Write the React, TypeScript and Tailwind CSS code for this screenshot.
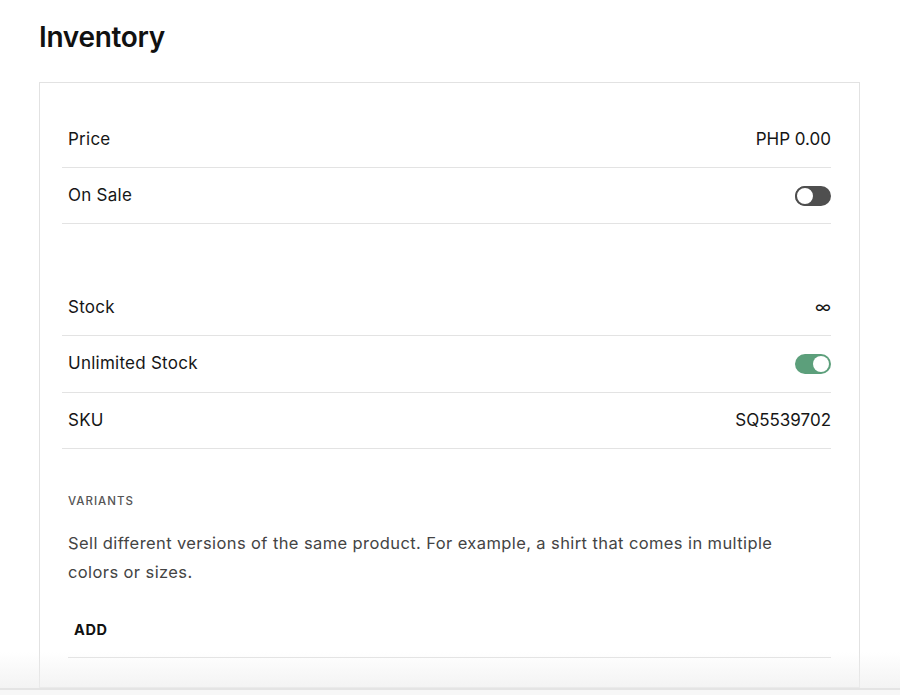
import React from "react";

function Toggle({ on }: { on: boolean }) {
  if (on) {
    return (
      <div className="w-[36px] h-[20px] rounded-full bg-[#5c9f7b] flex items-center justify-end pr-[2px]">
        <div className="w-[16px] h-[16px] rounded-full bg-white" />
      </div>
    );
  }
  return (
    <div className="w-[36px] h-[20px] rounded-full bg-[#4f4f4f] flex items-center justify-start">
      <div className="w-[20px] h-[20px] rounded-full bg-white border-[2px] border-[#4f4f4f]" />
    </div>
  );
}

function Row({ label, right }: { label: string; right: React.ReactNode }) {
  return (
    <div className="h-[56px] flex items-center justify-between border-b border-[#e3e3e3] pl-[6px]">
      <span className="text-[17px] text-[#161616] tracking-[0.25px]">{label}</span>
      {right}
    </div>
  );
}

export default function App() {
  return (
    <div
      className="relative w-[900px] h-[695px] bg-white overflow-hidden"
      style={{ fontFamily: "Inter, 'Liberation Sans', sans-serif" }}
    >
      <div className="pl-[39px] pt-[19px]">
        <h1 className="text-[28px] font-semibold text-[#111] leading-[36px] tracking-[-0.3px]">Inventory</h1>
      </div>
      <div className="ml-[39px] mt-[27px] w-[821px] h-[606px] border border-[#e2e2e2] pl-[22px] pr-[28px] pt-[29px]">
        <Row label="Price" right={<span className="text-[17px] text-[#161616]">PHP 0.00</span>} />
        <Row label="On Sale" right={<Toggle on={false} />} />
        <div className="h-[56px]" />
        <Row
          label="Stock"
          right={<span className="text-[17px] leading-none text-[#161616]">∞</span>}
        />
        <div className="h-[57px] flex items-center justify-between border-b border-[#e3e3e3] pl-[6px]">
          <span className="text-[17px] text-[#161616] tracking-[0.25px]">Unlimited Stock</span>
          <Toggle on={true} />
        </div>
        <Row label="SKU" right={<span className="text-[17px] text-[#161616]">SQ5539702</span>} />
        <div className="pl-[6px]">
          <div className="pt-[44px] text-[11.5px] tracking-[1px] text-[#555] font-medium leading-[16px]">VARIANTS</div>
          <p className="mt-[20px] text-[16.5px] leading-[29px] text-[#444] tracking-[0.4px] pr-[40px]">
            Sell different versions of the same product. For example, a shirt that comes in multiple colors or sizes.
          </p>
          <div className="mt-[33px] pl-[6px] text-[14.5px] font-bold text-[#111] tracking-[0.6px] leading-[20px]">ADD</div>
          <div className="mt-[17px] border-b border-[#e3e3e3]" />
        </div>
      </div>
      <div className="absolute left-0 right-0 bottom-[7px] h-[36px] bg-gradient-to-b from-[rgba(255,255,255,0)] to-[rgba(238,238,238,0.7)]" />
      <div className="absolute left-0 right-0 bottom-[5px] h-[2px] bg-[#e4e4e4]" />
      <div className="absolute left-0 right-0 bottom-0 h-[5px] bg-[#f7f7f7]" />
    </div>
  );
}
